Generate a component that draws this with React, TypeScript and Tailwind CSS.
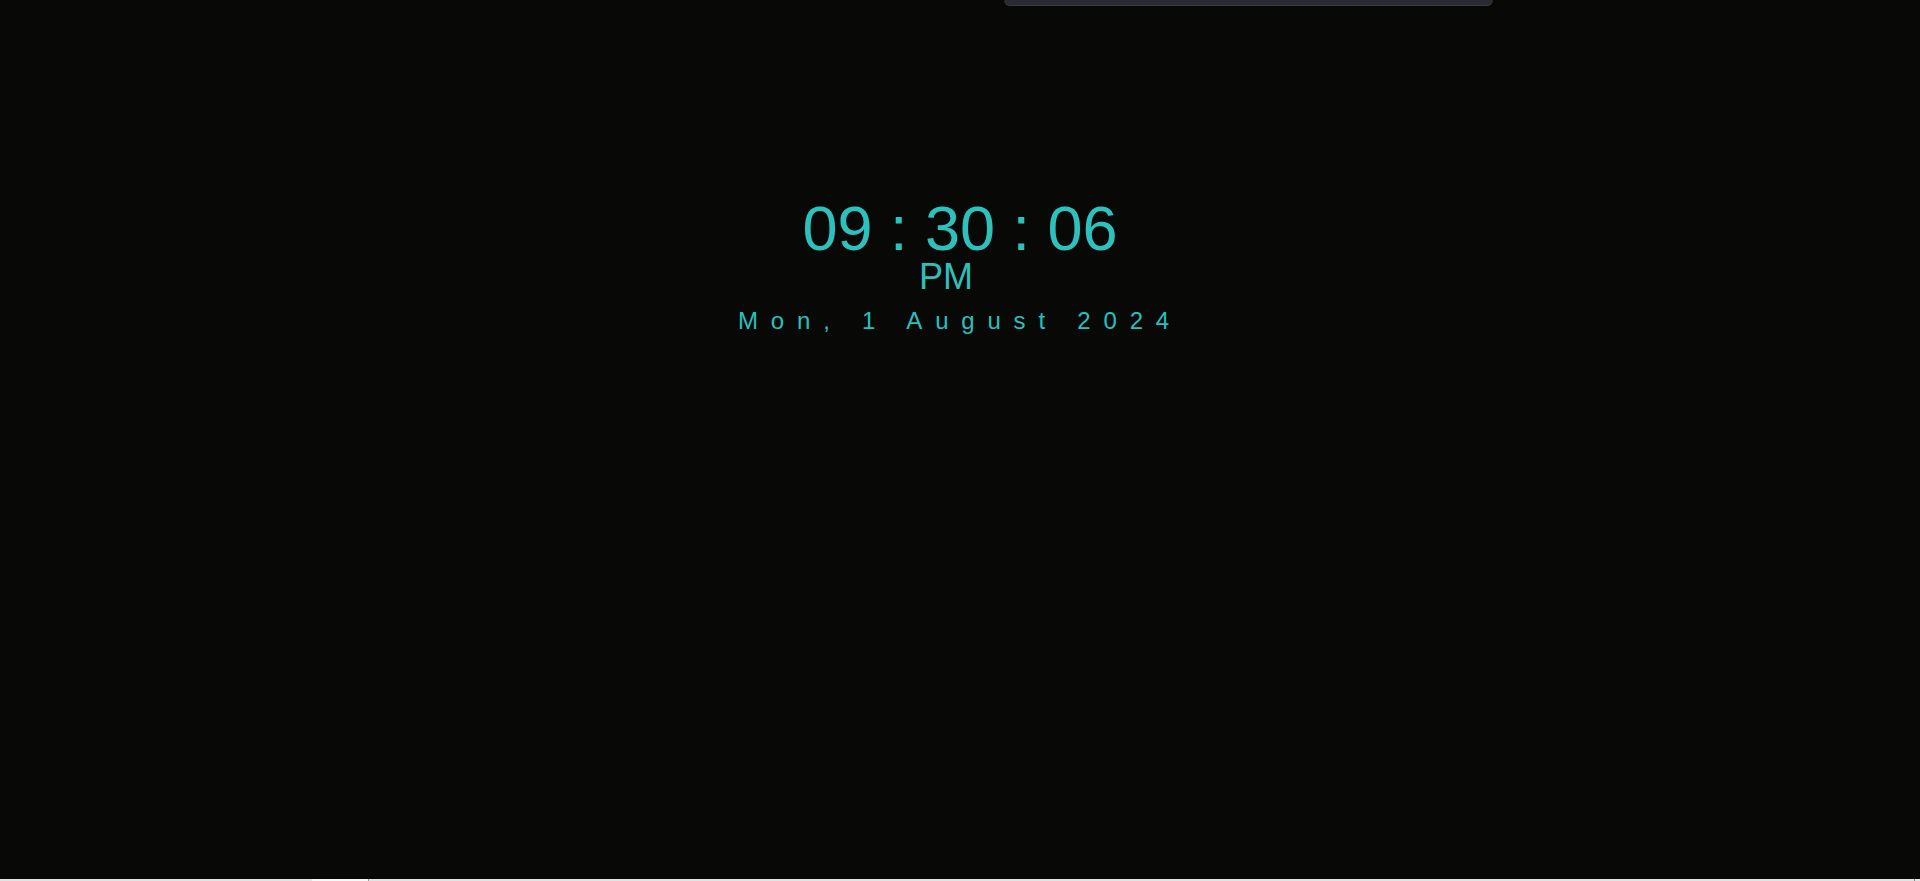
export default function App() {
  const time = "09 : 30 : 06";
  const period = "PM";
  const date = "Mon, 1 August 2024";

  return (
    <div className="relative flex h-[881px] w-full flex-col overflow-hidden bg-[#080807] font-['Liberation_Sans',Arial,sans-serif]">
      {/* panel edge peeking in from the top */}
      <div className="absolute left-[1004px] top-0 h-[6px] w-[489px] rounded-b-[10px] border-b border-[#3a3b40] bg-[#2a2b30]" />

      <main className="flex flex-1 flex-col items-center pt-[200px] text-[#2cc1bc]">
        <div className="text-[63px] leading-[56px]">{time}</div>
        <div className="mt-[3px] pr-[28px] text-[36px] leading-none text-[#2fbfb9]">{period}</div>
        <div className="mt-[14px] text-[24px] leading-none tracking-[12.8px] text-[#26c0c0]">
          {date}
        </div>
      </main>

      {/* strip of the taskbar at the bottom edge */}
      <div className="flex h-[2px] w-full bg-[#e3e3e3]">
        <div className="ml-[312px] w-[56px] bg-[#f7f7f7]" />
        <div className="w-px bg-[#9a9a9a]" />
        <div className="flex-1" />
        <div className="mr-[5px] w-px bg-[#8a8a8a]" />
      </div>
    </div>
  );
}
